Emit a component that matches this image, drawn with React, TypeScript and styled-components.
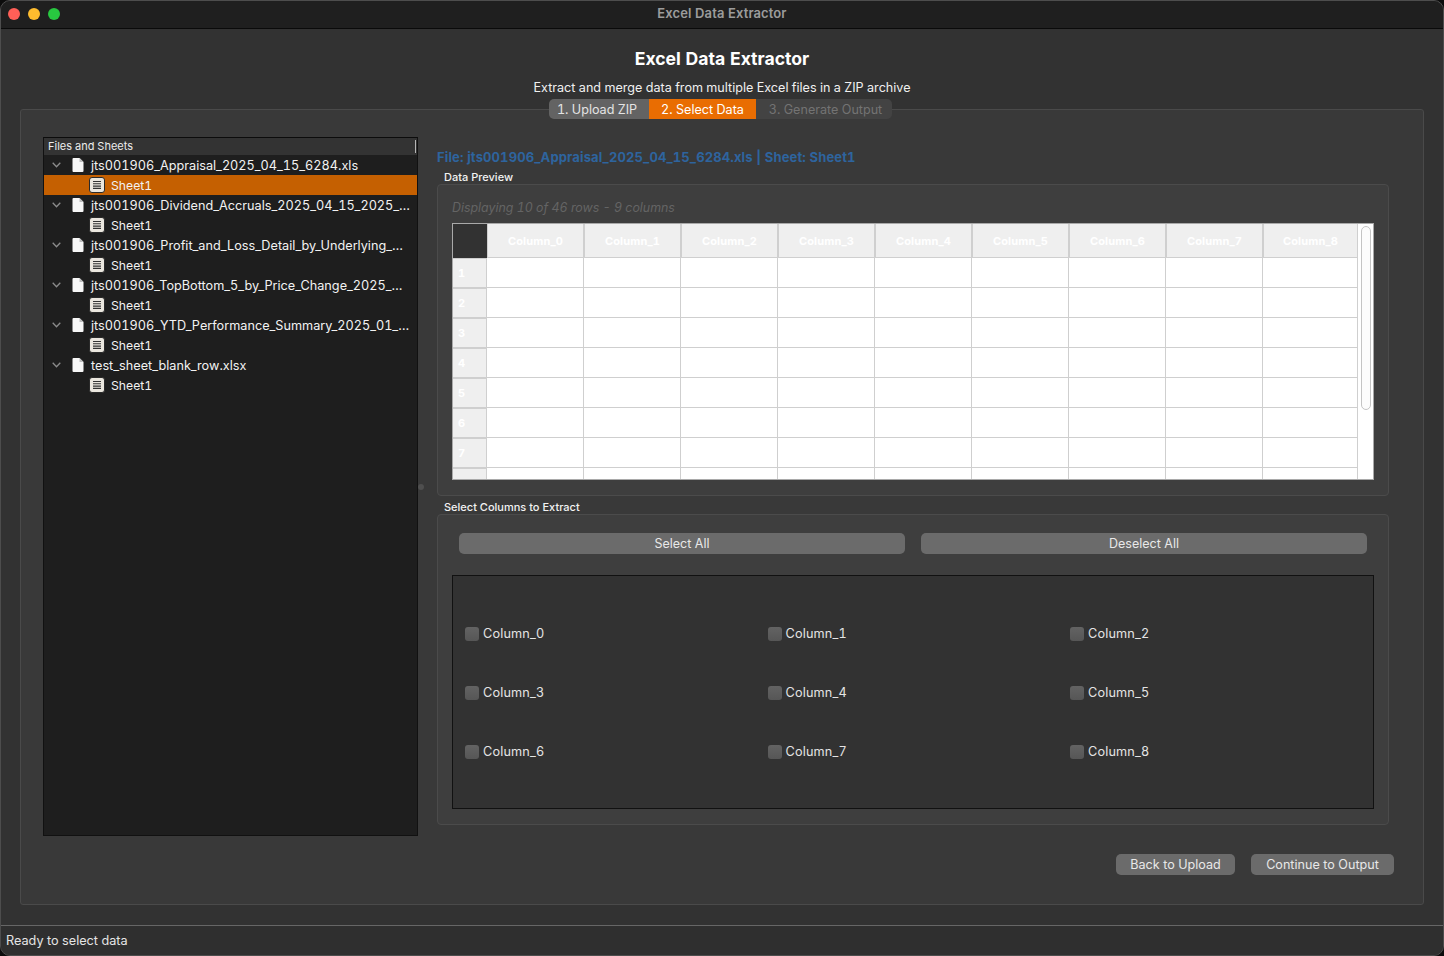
import React from 'react';
import styled, { createGlobalStyle } from 'styled-components';

const GlobalStyle = createGlobalStyle`
  html, body {
    margin: 0;
    padding: 0;
    background: #0c0c0c;
  }
  * {
    box-sizing: border-box;
  }
`;

const font = `Inter, "Liberation Sans", sans-serif`;

const Window = styled.div`
  width: 1444px;
  height: 956px;
  display: flex;
  flex-direction: column;
  background: #323232;
  border-radius: 10px;
  border: 1px solid #4d4d4d;
  overflow: hidden;
  font-family: ${font};
  font-size: 13px;
  font-variant-numeric: tabular-nums;
  color: #e6e6e6;
`;

const TitleBar = styled.div`
  flex: 0 0 28px;
  padding-bottom: 3px;
  display: flex;
  align-items: center;
  position: relative;
  justify-content: center;
  background: #1f1f1f;
  border-bottom: 1px solid #0a0a0a;
  color: #9c9c9c;
  font-size: 13px;
  font-weight: 600;
  letter-spacing: 0.1px;
`;

const Lights = styled.div`
  position: absolute;
  left: 7px;
  top: 7px;
  display: flex;
  gap: 8px;
`;

const Light = styled.span<{ $color: string }>`
  width: 12px;
  height: 12px;
  border-radius: 50%;
  background: ${(p) => p.$color};
`;

const Header = styled.header`
  display: flex;
  flex-direction: column;
  align-items: center;
  padding-top: 19px;
`;

const Heading = styled.h1`
  margin: 0;
  font-size: 17.6px;
  line-height: 22px;
  font-weight: 700;
  color: #fff;
`;

const Subtitle = styled.p`
  margin: 10px 0 0;
  font-size: 12.6px;
  line-height: 16px;
  color: #f0f0f0;
`;

const Tabs = styled.div`
  position: relative;
  z-index: 1;
  display: flex;
  height: 20px;
  margin-top: 3px;
  margin-right: 3px;
  margin-bottom: -10px;
  border-radius: 5px;
  overflow: hidden;
`;

const Tab = styled.div<{ $state: 'done' | 'active' | 'off'; $w: number }>`
  width: ${(p) => p.$w}px;
  display: flex;
  align-items: center;
  justify-content: center;
  padding-right: ${(p) => (p.$state === 'done' ? '4px' : '0')};
  padding-left: ${(p) => (p.$state === 'off' ? '3px' : '0')};
  font-size: 12.6px;
  background: ${(p) =>
    p.$state === 'active' ? '#e96d02' : p.$state === 'done' ? '#636363' : '#434343'};
  color: ${(p) =>
    p.$state === 'active' ? '#fff' : p.$state === 'done' ? '#e4e4e4' : '#737373'};
`;

const Frame = styled.main`
  margin: 0 19px;
  width: 1404px;
  height: 796px;
  display: flex;
  flex-direction: column;
  padding: 27px 29px 0 22px;
  background: #393939;
  border: 1px solid #4a4a4a;
  border-radius: 3px;
`;

const Split = styled.div`
  display: flex;
  height: 699px;
  margin-right: 5px;
`;

const TreePanel = styled.aside`
  flex: 0 0 375px;
  display: flex;
  flex-direction: column;
  background: #1e1e1e;
  border: 1px solid #111;
  border-top-color: #0c0c0c;
`;

const TreeHead = styled.div`
  flex: 0 0 17px;
  display: flex;
  align-items: center;
  justify-content: space-between;
  padding: 0 0 1px 4px;
  background: #333;
  font-size: 11px;
  color: #ececec;
  &::after {
    content: '';
    width: 1px;
    height: 13px;
    background: #b5b5b5;
    margin-right: 1px;
  }
`;

const TreeRow = styled.div<{ $selected?: boolean; $child?: boolean }>`
  height: 20px;
  display: flex;
  align-items: center;
  padding-left: ${(p) => (p.$child ? '45px' : '8px')};
  background: ${(p) => (p.$selected ? '#c56001' : 'transparent')};
  color: #f2f2f2;
  font-size: ${(p) => (p.$child ? '12.2px' : '12.7px')};
  white-space: nowrap;
`;

const Chevron = styled.svg`
  width: 9px;
  height: 6px;
  margin-right: 11px;
  flex: none;
`;

const DocIcon = styled.svg`
  width: 12px;
  height: 14px;
  margin-right: 7px;
  flex: none;
`;

const SheetIcon = styled.svg`
  width: 16px;
  height: 16px;
  margin-right: 6px;
  flex: none;
`;

const Gutter = styled.div`
  flex: 0 0 19px;
  display: flex;
  align-items: center;
  justify-content: center;
  padding-top: 1px;
  &::before {
    content: '';
    width: 6px;
    height: 6px;
    margin-right: 13px;
    border-radius: 50%;
    background: #4f4f4f;
  }
`;

const Content = styled.section`
  flex: 1;
  min-width: 0;
  display: flex;
  flex-direction: column;
`;

const FileLabel = styled.div`
  margin-top: 12px;
  height: 16px;
  line-height: 16px;
  font-size: 13px;
  font-weight: 700;
  letter-spacing: 0.13px;
  color: #2e649e;
`;

const GroupLabel = styled.div<{ $first?: boolean }>`
  height: 13px;
  margin-top: ${(p) => (p.$first ? '6px' : '5px')};
  padding-left: 7px;
  line-height: 13px;
  font-size: 11px;
  font-weight: 500;
  color: #f2f2f2;
`;

const GroupBox = styled.div<{ $h: number }>`
  height: ${(p) => p.$h}px;
  padding: 0 14px;
  background: #3e3e3e;
  border: 1px solid #4b4b4b;
  border-radius: 4px;
  display: flex;
  flex-direction: column;
`;

const Caption = styled.div`
  height: 16px;
  margin-top: 15px;
  line-height: 16px;
  font-size: 12.4px;
  font-style: italic;
  color: #646464;
`;

const Sheet = styled.div`
  height: 257px;
  margin-top: 7px;
  display: flex;
  overflow: hidden;
  background: #fff;
  border: 1px solid #a9a9a9;
`;

const Grid = styled.div`
  flex: 0 0 905px;
  display: grid;
  grid-template-columns: 34px repeat(8, 97px) 95px;
  grid-template-rows: 34px;
  grid-auto-rows: 30px;
  align-content: start;
`;

const Corner = styled.div`
  background: #323232;
`;

const ColHead = styled.div`
  display: flex;
  align-items: center;
  justify-content: center;
  background: #efefef;
  border-left: 1px solid #cfcfcf;
  border-right: 1px solid #cfcfcf;
  border-bottom: 1px solid #cfcfcf;
  color: #fff;
  font-size: 11px;
  font-weight: 700;
  letter-spacing: 0.15px;
`;

const RowHead = styled.div`
  display: flex;
  align-items: center;
  padding-left: 5px;
  background: #efefef;
  border-right: 1px solid #cfcfcf;
  border-top: 1px solid #cfcfcf;
  border-bottom: 1px solid #cfcfcf;
  color: #fff;
  font-size: 11px;
  font-weight: 700;
`;

const Cell = styled.div`
  background: #fff;
  border-right: 1px solid #cfcfcf;
  border-bottom: 1px solid #cfcfcf;
`;

const ScrollTrack = styled.div`
  flex: 1;
  padding: 2px 2px 0 3px;
  background: #fff;
`;

const ScrollThumb = styled.div`
  width: 10px;
  height: 184px;
  background: #fcfcfc;
  border: 1px solid #c4c4c4;
  border-radius: 5px;
`;

const ButtonRow = styled.div`
  display: flex;
  gap: 16px;
  margin: 18px 7px 0;
`;

const WideButton = styled.button`
  flex: 1;
  height: 21px;
  padding: 0;
  border: 0;
  border-radius: 5px;
  background: #6b6b6b;
  color: #e8e8e8;
  font-family: inherit;
  font-size: 12.5px;
`;

const CheckPanel = styled.div`
  height: 234px;
  margin-top: 21px;
  padding: 28px 0 28px 12px;
  display: grid;
  grid-template-columns: repeat(3, 302.5px);
  grid-template-rows: repeat(3, 59px);
  background: #323232;
  border: 1px solid #111;
`;

const CheckItem = styled.label`
  display: flex;
  align-items: center;
  gap: 4px;
  font-size: 12.7px;
  letter-spacing: 0.15px;
  color: #e4e4e4;
`;

const Box = styled.span`
  width: 14px;
  height: 14px;
  border-radius: 3px;
  background: linear-gradient(#636363, #565656);
`;

const Footer = styled.div`
  display: flex;
  justify-content: flex-end;
  gap: 16px;
  margin-top: 18px;
`;

const PushButton = styled.button<{ $w: number }>`
  width: ${(p) => p.$w}px;
  height: 21px;
  padding: 0;
  border: 0;
  border-radius: 5px;
  background: #6b6b6b;
  color: #e8e8e8;
  font-family: inherit;
  font-size: 12.6px;
`;

const StatusBar = styled.footer`
  margin-top: 20px;
  flex: 1;
  display: flex;
  align-items: center;
  padding-left: 5px;
  border-top: 1px solid #666;
  background: #2f2f2f;
  font-size: 12.7px;
  color: #e4e4e4;
`;

const files = [
  'jts001906_Appraisal_2025_04_15_6284.xls',
  'jts001906_Dividend_Accruals_2025_04_15_2025_…',
  'jts001906_Profit_and_Loss_Detail_by_Underlying_…',
  'jts001906_TopBottom_5_by_Price_Change_2025_…',
  'jts001906_YTD_Performance_Summary_2025_01_…',
  'test_sheet_blank_row.xlsx',
];

const columns = Array.from({ length: 9 }, (_, i) => `Column_${i}`);
const rows = [1, 2, 3, 4, 5, 6, 7, 8];

const ChevronDown = () => (
  <Chevron viewBox="0 0 9 6">
    <path d="M0.7 0.8 L4.5 4.8 L8.3 0.8" fill="none" stroke="#8a8a8a" strokeWidth="1.3" />
  </Chevron>
);

const FileDoc = () => (
  <DocIcon viewBox="0 0 12 14">
    <path d="M1.5 0 H7.5 L11.5 4 V13 A1 1 0 0 1 10.5 14 H1.5 A1 1 0 0 1 0.5 13 V1 A1 1 0 0 1 1.5 0 Z" fill="#f7f7f7" />
    <path d="M7.5 0 V4 H11.5 Z" fill="#bdbdbd" />
  </DocIcon>
);

const SheetDoc = () => (
  <SheetIcon viewBox="0 0 16 16">
    <rect x="0.5" y="0.5" width="15" height="15" rx="2.5" fill="#ebe7df" stroke="#2a2a2a" />
    <path d="M4 4.5 H12 M4 6.8 H12 M4 9.1 H12 M4 11.4 H12" stroke="#333" strokeWidth="1.1" />
  </SheetIcon>
);

export default function App() {
  return (
    <>
      <GlobalStyle />
      <Window>
        <TitleBar>
          <Lights>
            <Light $color="#ff5f57" />
            <Light $color="#febc2e" />
            <Light $color="#28c840" />
          </Lights>
          Excel Data Extractor
        </TitleBar>
        <Header>
          <Heading>Excel Data Extractor</Heading>
          <Subtitle>Extract and merge data from multiple Excel files in a ZIP archive</Subtitle>
          <Tabs>
            <Tab $state="done" $w={100}>1. Upload ZIP</Tab>
            <Tab $state="active" $w={107}>2. Select Data</Tab>
            <Tab $state="off" $w={136}>3. Generate Output</Tab>
          </Tabs>
        </Header>
        <Frame>
          <Split>
            <TreePanel>
              <TreeHead>Files and Sheets</TreeHead>
              {files.map((name, i) => (
                <React.Fragment key={name}>
                  <TreeRow>
                    <ChevronDown />
                    <FileDoc />
                    {name}
                  </TreeRow>
                  <TreeRow $child $selected={i === 0}>
                    <SheetDoc />
                    Sheet1
                  </TreeRow>
                </React.Fragment>
              ))}
            </TreePanel>
            <Gutter />
            <Content>
              <FileLabel>File: jts001906_Appraisal_2025_04_15_6284.xls | Sheet: Sheet1</FileLabel>
              <GroupLabel $first>Data Preview</GroupLabel>
              <GroupBox $h={312}>
                <Caption>Displaying 10 of 46 rows - 9 columns</Caption>
                <Sheet>
                  <Grid>
                    <Corner />
                    {columns.map((c) => (
                      <ColHead key={c}>{c}</ColHead>
                    ))}
                    {rows.map((r) => (
                      <React.Fragment key={r}>
                        <RowHead>{r < 8 ? r : ''}</RowHead>
                        {columns.map((c) => (
                          <Cell key={c} />
                        ))}
                      </React.Fragment>
                    ))}
                  </Grid>
                  <ScrollTrack>
                    <ScrollThumb />
                  </ScrollTrack>
                </Sheet>
              </GroupBox>
              <GroupLabel>Select Columns to Extract</GroupLabel>
              <GroupBox $h={311}>
                <ButtonRow>
                  <WideButton>Select All</WideButton>
                  <WideButton>Deselect All</WideButton>
                </ButtonRow>
                <CheckPanel>
                  {columns.map((c) => (
                    <CheckItem key={c}>
                      <Box />
                      {c}
                    </CheckItem>
                  ))}
                </CheckPanel>
              </GroupBox>
            </Content>
          </Split>
          <Footer>
            <PushButton $w={119}>Back to Upload</PushButton>
            <PushButton $w={143}>Continue to Output</PushButton>
          </Footer>
        </Frame>
        <StatusBar>Ready to select data</StatusBar>
      </Window>
    </>
  );
}
